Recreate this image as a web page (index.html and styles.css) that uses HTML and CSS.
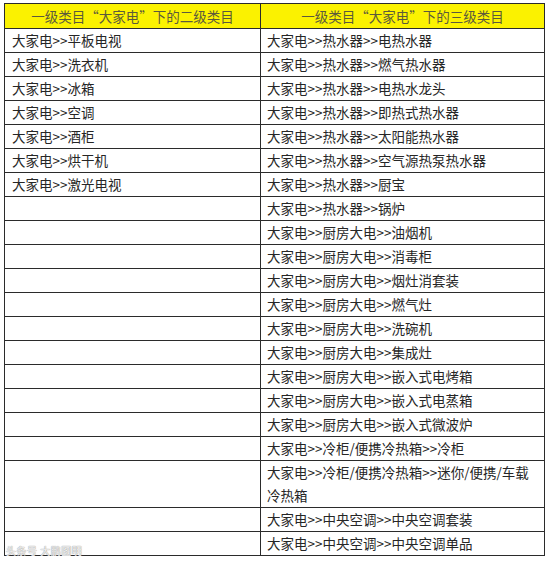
FILE: index.html
```html
<!DOCTYPE html>
<html lang="zh-CN">
<head>
<meta charset="utf-8">
<link rel="stylesheet" href="styles.css">
</head>
<body>
<div class="wrap">
<table class="cat">
<colgroup><col class="c1"><col class="c2"></colgroup>
<thead>
<tr><th>一级类目“大家电”下的二级类目</th><th>一级类目“大家电”下的三级类目</th></tr>
</thead>
<tbody>
<tr><td>大家电&gt;&gt;平板电视</td><td>大家电&gt;&gt;热水器&gt;&gt;电热水器</td></tr>
<tr><td>大家电&gt;&gt;洗衣机</td><td>大家电&gt;&gt;热水器&gt;&gt;燃气热水器</td></tr>
<tr><td>大家电&gt;&gt;冰箱</td><td>大家电&gt;&gt;热水器&gt;&gt;电热水龙头</td></tr>
<tr><td>大家电&gt;&gt;空调</td><td>大家电&gt;&gt;热水器&gt;&gt;即热式热水器</td></tr>
<tr><td>大家电&gt;&gt;酒柜</td><td>大家电&gt;&gt;热水器&gt;&gt;太阳能热水器</td></tr>
<tr><td>大家电&gt;&gt;烘干机</td><td>大家电&gt;&gt;热水器&gt;&gt;空气源热泵热水器</td></tr>
<tr><td>大家电&gt;&gt;激光电视</td><td>大家电&gt;&gt;热水器&gt;&gt;厨宝</td></tr>
<tr><td></td><td>大家电&gt;&gt;热水器&gt;&gt;锅炉</td></tr>
<tr><td></td><td>大家电&gt;&gt;厨房大电&gt;&gt;油烟机</td></tr>
<tr><td></td><td>大家电&gt;&gt;厨房大电&gt;&gt;消毒柜</td></tr>
<tr><td></td><td>大家电&gt;&gt;厨房大电&gt;&gt;烟灶消套装</td></tr>
<tr><td></td><td>大家电&gt;&gt;厨房大电&gt;&gt;燃气灶</td></tr>
<tr><td></td><td>大家电&gt;&gt;厨房大电&gt;&gt;洗碗机</td></tr>
<tr><td></td><td>大家电&gt;&gt;厨房大电&gt;&gt;集成灶</td></tr>
<tr><td></td><td>大家电&gt;&gt;厨房大电&gt;&gt;嵌入式电烤箱</td></tr>
<tr><td></td><td>大家电&gt;&gt;厨房大电&gt;&gt;嵌入式电蒸箱</td></tr>
<tr><td></td><td>大家电&gt;&gt;厨房大电&gt;&gt;嵌入式微波炉</td></tr>
<tr><td></td><td>大家电&gt;&gt;冷柜/便携冷热箱&gt;&gt;冷柜</td></tr>
<tr><td></td><td>大家电&gt;&gt;冷柜/便携冷热箱&gt;&gt;迷你/便携/车载<br>冷热箱</td></tr>
<tr><td></td><td>大家电&gt;&gt;中央空调&gt;&gt;中央空调套装</td></tr>
<tr><td></td><td>大家电&gt;&gt;中央空调&gt;&gt;中央空调单品</td></tr>
</tbody>
</table>
<div class="mark">头条号 大鹏图明</div>
</div>
</body>
</html>
```
FILE: styles.css
```css
html, body {
  margin: 0;
  padding: 0;
  background: #ffffff;
}
body {
  font-family: "Noto Sans CJK SC", "Liberation Sans", sans-serif;
  color: #262626;
}
.wrap {
  position: relative;
  padding: 3px 0 0 4px;
}
.cat {
  border-collapse: collapse;
  table-layout: fixed;
  width: 540px;
  font-size: 13.5px;
}
.c1 { width: 256px; }
.c2 { width: 284px; }
.cat th, .cat td {
  border: 1px solid #2b2b2b;
  padding: 0 0 0 7px;
  line-height: 23px;
  height: 23px;
  text-align: left;
  vertical-align: middle;
  white-space: nowrap;
  font-weight: normal;
}
.cat td + td {
  padding-left: 6px;
}
.cat th {
  background: #fbf200;
  color: #5c5a3c;
  text-align: center;
  padding: 0;
  line-height: 24px;
  height: 24px;
}
.mark {
  position: absolute;
  left: 6px;
  top: 545px;
  font-size: 10px;
  line-height: 12px;
  color: rgba(255, 255, 255, 0.85);
  text-shadow: 0 0 1px #9a9a9a, 0 0 1px #9a9a9a;
  letter-spacing: 0.5px;
}
```
